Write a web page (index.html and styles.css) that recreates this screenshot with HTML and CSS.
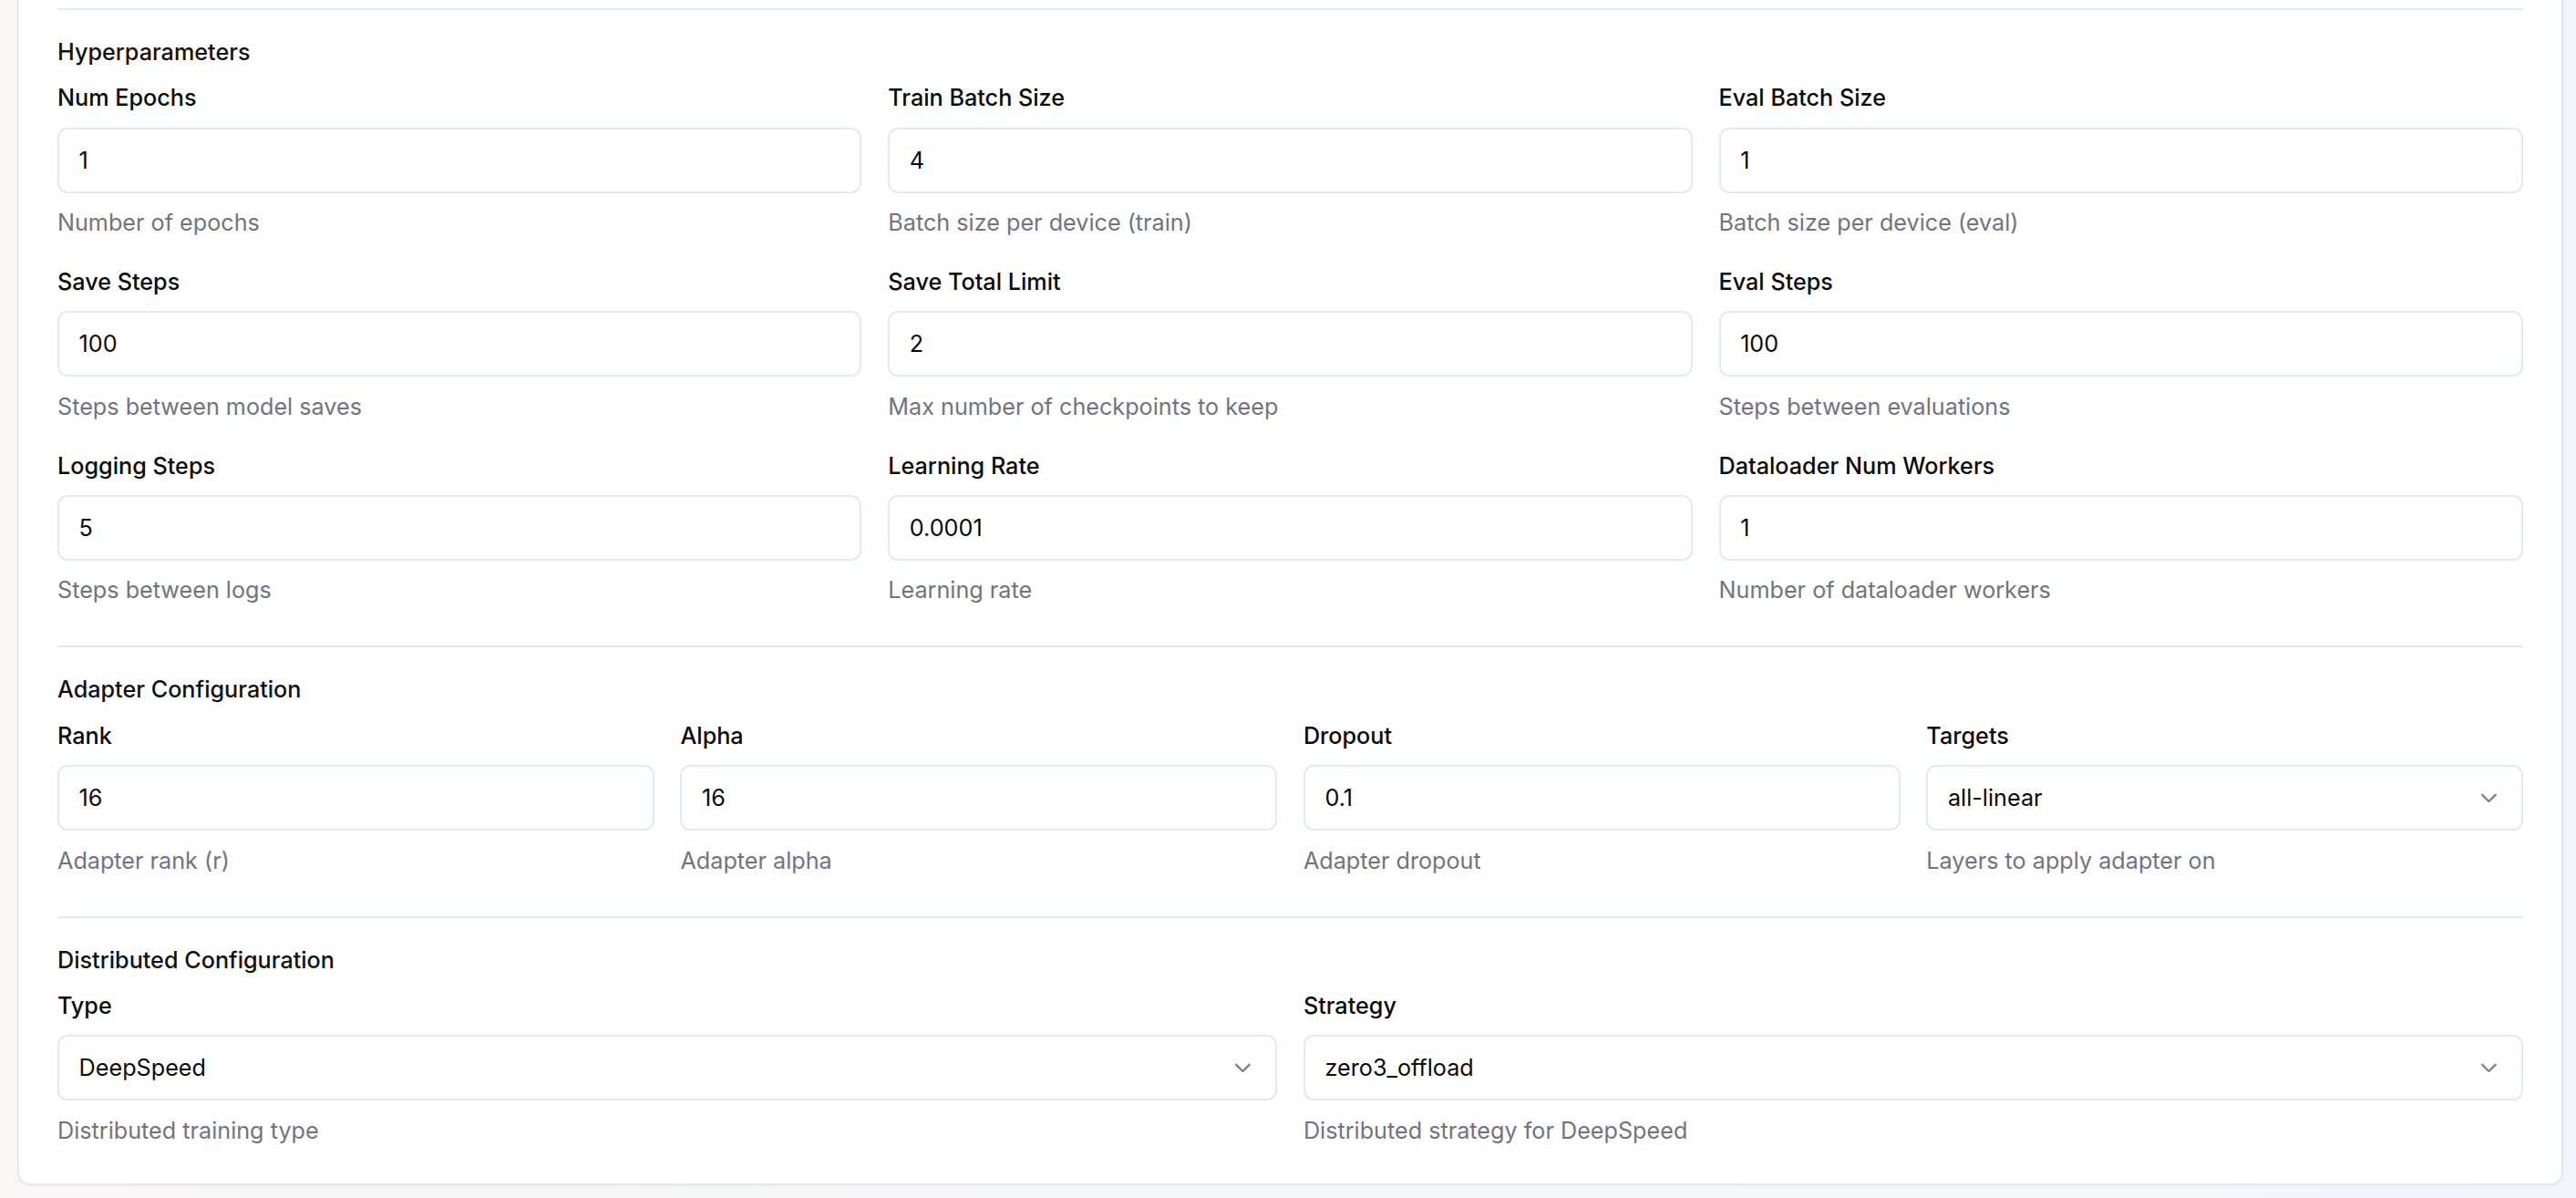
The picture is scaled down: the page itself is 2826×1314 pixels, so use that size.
FILE: index.html
```html
<!DOCTYPE html>
<html lang="en">
<head>
<meta charset="utf-8">
<title>Training Configuration</title>
<link rel="stylesheet" href="styles.css">
</head>
<body>
<main class="page">
  <div class="card">
    <section class="section">
      <h3 class="section-title">Hyperparameters</h3>
      <div class="grid grid-3">
        <div class="field"><label class="label">Num Epochs</label><div class="input">1</div><p class="desc">Number of epochs</p></div>
        <div class="field"><label class="label">Train Batch Size</label><div class="input">4</div><p class="desc">Batch size per device (train)</p></div>
        <div class="field"><label class="label">Eval Batch Size</label><div class="input">1</div><p class="desc">Batch size per device (eval)</p></div>
        <div class="field"><label class="label">Save Steps</label><div class="input">100</div><p class="desc">Steps between model saves</p></div>
        <div class="field"><label class="label">Save Total Limit</label><div class="input">2</div><p class="desc">Max number of checkpoints to keep</p></div>
        <div class="field"><label class="label">Eval Steps</label><div class="input">100</div><p class="desc">Steps between evaluations</p></div>
        <div class="field"><label class="label">Logging Steps</label><div class="input">5</div><p class="desc">Steps between logs</p></div>
        <div class="field"><label class="label">Learning Rate</label><div class="input">0.0001</div><p class="desc">Learning rate</p></div>
        <div class="field"><label class="label">Dataloader Num Workers</label><div class="input">1</div><p class="desc">Number of dataloader workers</p></div>
      </div>
    </section>
    <section class="section">
      <h3 class="section-title">Adapter Configuration</h3>
      <div class="grid grid-4">
        <div class="field"><label class="label">Rank</label><div class="input">16</div><p class="desc">Adapter rank (r)</p></div>
        <div class="field"><label class="label">Alpha</label><div class="input">16</div><p class="desc">Adapter alpha</p></div>
        <div class="field"><label class="label">Dropout</label><div class="input">0.1</div><p class="desc">Adapter dropout</p></div>
        <div class="field"><label class="label">Targets</label><div class="input select"><span>all-linear</span><svg class="chev" viewBox="0 0 24 24" fill="none" stroke="currentColor" stroke-width="2" stroke-linecap="round" stroke-linejoin="round"><path d="m6 9 6 6 6-6"/></svg></div><p class="desc">Layers to apply adapter on</p></div>
      </div>
    </section>
    <section class="section">
      <h3 class="section-title">Distributed Configuration</h3>
      <div class="grid grid-2">
        <div class="field"><label class="label">Type</label><div class="input select"><span>DeepSpeed</span><svg class="chev" viewBox="0 0 24 24" fill="none" stroke="currentColor" stroke-width="2" stroke-linecap="round" stroke-linejoin="round"><path d="m6 9 6 6 6-6"/></svg></div><p class="desc">Distributed training type</p></div>
        <div class="field"><label class="label">Strategy</label><div class="input select"><span>zero3_offload</span><svg class="chev" viewBox="0 0 24 24" fill="none" stroke="currentColor" stroke-width="2" stroke-linecap="round" stroke-linejoin="round"><path d="m6 9 6 6 6-6"/></svg></div><p class="desc">Distributed strategy for DeepSpeed</p></div>
      </div>
    </section>
  </div>
</main>
</body>
</html>
```

FILE: styles.css
```css
html, body {
  margin: 0;
  padding: 0;
}

body {
  background: linear-gradient(to right, #f9f8f7, #f5f6f8 50%, #f2f5fa);
  font-family: Inter, "Noto Sans", "Liberation Sans", sans-serif;
  color: #0a0a0a;
  overflow: hidden;
  min-height: 1314px;
}

.page {
  padding: 0 14px 0 19px;
}

.card {
  margin-top: -30px;
  padding: 37px 42px 40px;
  background: #ffffff;
  border: 2px solid #e5e9ef;
  border-radius: 14px;
  box-shadow: 0 1px 3px rgba(15, 23, 42, 0.04);
}

.section {
  border-top: 2px solid #e2e8f0;
  padding-top: 28px;
}

.section + .section {
  margin-top: 43px;
}

.section-title {
  margin: 0 0 14.4px;
  font-size: 25.2px;
  line-height: 36px;
  font-weight: 500;
  color: #111111;
}

.grid {
  display: grid;
  gap: 28.8px;
}

.grid-3 { grid-template-columns: repeat(3, minmax(0, 1fr)); }
.grid-4 { grid-template-columns: repeat(4, minmax(0, 1fr)); }
.grid-2 { grid-template-columns: repeat(2, minmax(0, 1fr)); }

.field {
  display: flex;
  flex-direction: column;
  min-width: 0;
}

.label {
  display: block;
  font-size: 25.2px;
  line-height: 36px;
  font-weight: 500;
  color: #0a0a0a;
  margin-bottom: 14.4px;
}

.input {
  box-sizing: border-box;
  height: 72px;
  display: flex;
  align-items: center;
  padding: 0 21.6px;
  border: 2px solid #e5e9f0;
  border-radius: 11px;
  background: #ffffff;
  font-size: 25.2px;
  color: #0a0a0a;
}

.select {
  justify-content: space-between;
}

.chev {
  width: 28.8px;
  height: 28.8px;
  color: #0a0a0a;
  opacity: 0.5;
  flex: none;
}

.desc {
  margin: 14.4px 0 0;
  font-size: 25.2px;
  line-height: 36px;
  color: #737380;
}
```
